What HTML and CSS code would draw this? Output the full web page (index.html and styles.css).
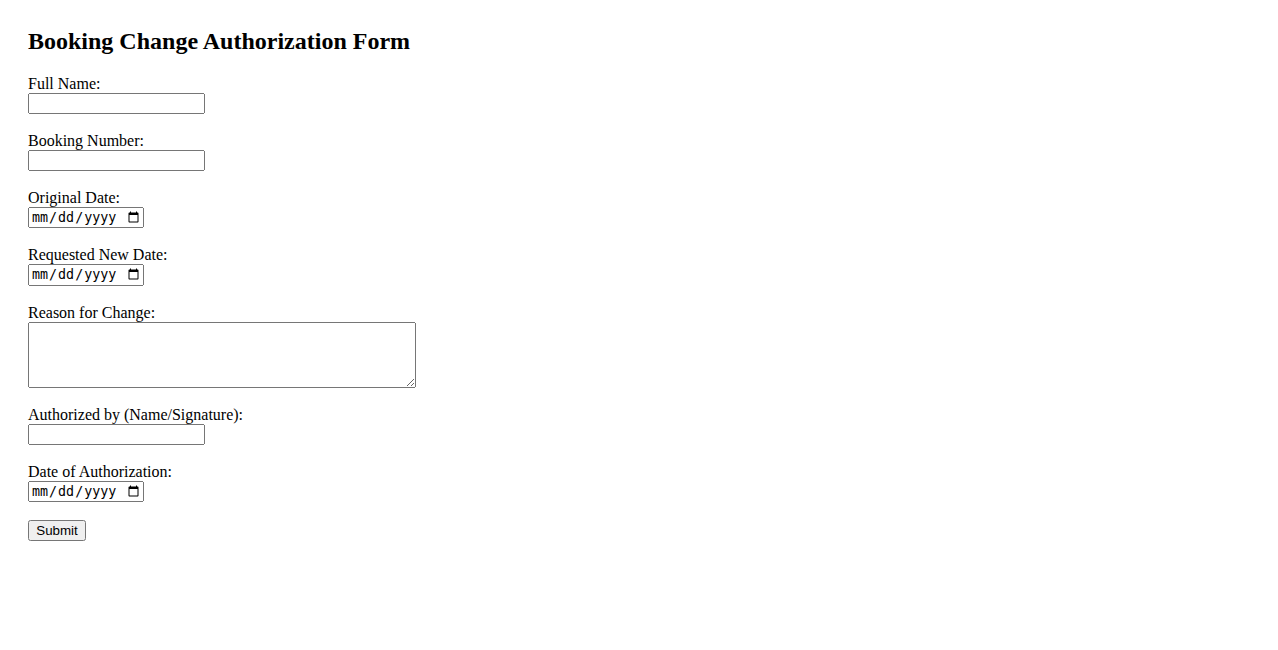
FILE: index.html
```html
<!DOCTYPE html>
<html lang="en">
  <head>
    <meta charset="UTF-8" />
    <title>Booking Change Authorization Form</title>
    <link rel="stylesheet" href="styles.css">
  </head>
  <body>
    <h2>Booking Change Authorization Form</h2>
    <form>
      <label for="fullName">Full Name:</label><br>
      <input type="text" id="fullName" name="fullName"><br><br>

      <label for="bookingNumber">Booking Number:</label><br>
      <input type="text" id="bookingNumber" name="bookingNumber"><br><br>

      <label for="originalDate">Original Date:</label><br>
      <input type="date" id="originalDate" name="originalDate"><br><br>

      <label for="newDate">Requested New Date:</label><br>
      <input type="date" id="newDate" name="newDate"><br><br>

      <label for="reason">Reason for Change:</label><br>
      <textarea id="reason" name="reason" rows="4"></textarea><br><br>

      <label for="authorizedBy">Authorized by (Name/Signature):</label><br>
      <input type="text" id="authorizedBy" name="authorizedBy"><br><br>

      <label for="authDate">Date of Authorization:</label><br>
      <input type="date" id="authDate" name="authDate"><br><br>

      <input type="submit" value="Submit">
    </form>
  </body>
</html>
```

FILE: styles.css
```css
/* PAGE */
body {
  font-family: "Liberation Serif", "Times New Roman", serif;
  margin: 8px;
  padding: 20px;
  color: #000;
  background: #fff;
}

h2 {
  margin-top: 0;
}

/* FORM FIELDS */
input[type="text"] {
  box-sizing: border-box;
  width: 177px;
  font-family: "Liberation Sans", Arial, sans-serif;
}

input[type="date"] {
  box-sizing: border-box;
  width: 116px;
}

textarea {
  box-sizing: border-box;
  width: 388px;
  vertical-align: bottom;
}

input[type="submit"] {
  box-sizing: border-box;
  width: 58px;
  font-family: "Liberation Sans", Arial, sans-serif;
}
```
